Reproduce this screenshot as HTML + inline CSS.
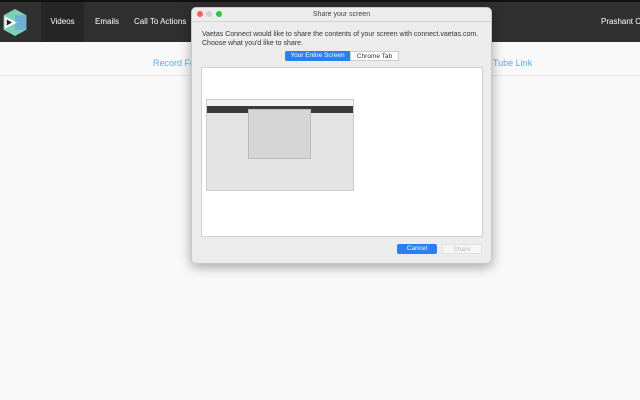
<!DOCTYPE html>
<html><head><style>
*{margin:0;padding:0;box-sizing:border-box}
body{width:640px;height:400px;background:#f9f9f9;font-family:"Liberation Sans",sans-serif;position:relative;overflow:hidden}
.hdr{position:absolute;left:0;top:0;width:640px;height:42px;background:#303030;border-top:2px solid #111}
.nav{position:absolute;top:0;height:40px;line-height:40px;color:#fff;font-size:8px;white-space:nowrap}
.a{position:absolute;color:#5aaee0;font-size:9px;top:58px;white-space:nowrap}
.dlg{position:absolute;left:191px;top:7px;width:301px;height:257px;background:#ececec;border-radius:5px;box-shadow:0 3px 12px rgba(0,0,0,.35);border:1px solid #c8c8c8}
.dot{position:absolute;top:3px;width:6px;height:6px;border-radius:50%}
.t{position:absolute;font-size:7px;color:#333;white-space:nowrap}
</style></head><body>
<div class="hdr">
<svg style="position:absolute;left:2px;top:6px" width="26" height="29" viewBox="0 0 24 28"><polygon points="12,1 23,7 23,21 12,27 1,21 1,7" fill="#7fcfb8"/><polygon points="12,7 23,7 23,21 12,21" fill="#6aa8d8" opacity=".8"/><polygon points="2,8 14,14 2,20" fill="#fff"/><polygon points="4,11 9,14 4,17" fill="#222"/></svg>
<div class="nav" style="left:41px;width:43px;background:#262626;text-align:center">Videos</div>
<div class="nav" style="left:95px">Emails</div>
<div class="nav" style="left:134px">Call To Actions</div>
<div class="nav" style="left:601px">Prashant Cha</div>
</div>
<div style="position:absolute;left:0;top:75px;width:640px;height:1px;background:#e6e6e6"></div>
<div class="a" style="left:153px">Record Fr</div>
<div class="a" style="left:493px">Tube Link</div>
<div class="dlg">
<div class="dot" style="left:5px;background:#fc5f57"></div>
<div class="dot" style="left:14px;background:#d0d0d0"></div>
<div class="dot" style="left:24px;background:#2ac840"></div>
<div class="t" style="left:0;width:299px;text-align:center;top:3px;color:#444">Share your screen</div>
<div style="position:absolute;left:0;top:13px;width:299px;height:1px;background:#d4d4d4"></div>
<div class="t" style="left:10px;top:22px;line-height:9px">Vaetas Connect would like to share the contents of your screen with connect.vaetas.com.<br>Choose what you'd like to share.</div>
<div style="position:absolute;left:93px;top:43px;width:65px;height:10px;background:#2a7ff5;color:#fff;font-size:6.5px;text-align:center;line-height:10px;border-radius:2px 0 0 2px">Your Entire Screen</div>
<div style="position:absolute;left:158px;top:43px;width:49px;height:10px;background:#fff;color:#333;font-size:6.5px;text-align:center;line-height:10px;border:1px solid #ccc">Chrome Tab</div>
<div style="position:absolute;left:9px;top:59px;width:282px;height:170px;background:#fff;border:1px solid #d0d0d0">
<div style="position:absolute;left:4px;top:31px;width:148px;height:92px;background:#e4e4e4;border:1px solid #ccc">
<div style="height:6px;background:#f3f3f3"></div>
<div style="height:7px;background:#3a3a3a"></div>
<div style="position:absolute;left:41px;top:9px;width:63px;height:50px;background:#d6d6d6;border:1px solid #bbb"></div>
</div>
</div>
<div style="position:absolute;left:205px;top:236px;width:40px;height:10px;background:#2a7ff5;color:#fff;font-size:6.5px;text-align:center;line-height:10px;border-radius:2px">Cancel</div>
<div style="position:absolute;left:250px;top:236px;width:40px;height:10px;background:#f6f6f6;color:#bbb;font-size:6.5px;text-align:center;line-height:10px;border-radius:2px;border:1px solid #e0e0e0">Share</div>
</div>
</body></html>
